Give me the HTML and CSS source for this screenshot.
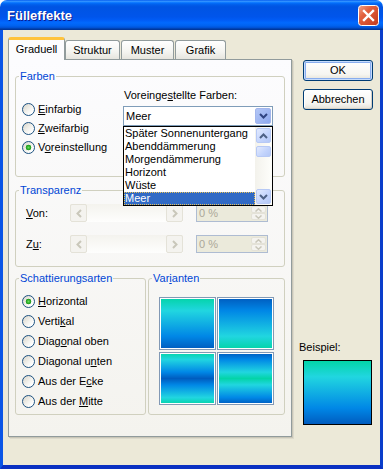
FILE: index.html
```html
<!DOCTYPE html>
<html lang="de">
<head>
<meta charset="utf-8">
<title>Fülleffekte</title>
<link rel="stylesheet" href="styles.css">
</head>
<body>
<div class="dialog">
  <div class="titlebar">
    <span class="title">Fülleffekte</span>
    <span class="close">
      <svg width="21" height="21" viewBox="0 0 21 21">
        <defs>
          <linearGradient id="cg" x1="0" y1="0" x2="1" y2="1">
            <stop offset="0" stop-color="#F2A48C"/>
            <stop offset="0.35" stop-color="#E2613F"/>
            <stop offset="1" stop-color="#C2391B"/>
          </linearGradient>
        </defs>
        <rect x="0.5" y="0.5" width="20" height="20" rx="3" fill="url(#cg)" stroke="#FFFFFF"/>
        <path d="M6 6 L15 15 M15 6 L6 15" stroke="#FFFFFF" stroke-width="2.4" stroke-linecap="square"/>
      </svg>
    </span>
  </div>
  <div class="client">
    <div class="tabarea">
      <div class="tabs">
        <div class="tab tab-sel">Graduell</div>
        <div class="tab tab-struktur">Struktur</div>
        <div class="tab tab-muster">Muster</div>
        <div class="tab tab-grafik">Grafik</div>
      </div>
      <div class="panel">
        <fieldset class="group g-farben">
          <legend>Farben</legend>
          <div class="farben-body">
            <div class="radios r-farben">
              <div class="radio"><span class="rb"></span><span><u>E</u>infarbig</span></div>
              <div class="radio"><span class="rb"></span><span><u>Z</u>weifarbig</span></div>
              <div class="radio"><span class="rb rb-on"></span><span>V<u>o</u>reinstellung</span></div>
            </div>
            <div class="preset">
              <div class="preset-label">Voreinge<u>s</u>tellte Farben:</div>
              <div class="combo">
                <div class="combo-box">
                  <span class="combo-text">Meer</span>
                  <span class="combo-btn">
                    <svg width="9" height="6" viewBox="0 0 9 6"><polyline points="1,1 4.5,4.5 8,1" fill="none" stroke="#2F4380" stroke-width="2"/></svg>
                  </span>
                </div>
                <div class="list">
                  <div class="lrows">
                    <div class="lrow">Später Sonnenuntergang</div>
                    <div class="lrow">Abenddämmerung</div>
                    <div class="lrow">Morgendämmerung</div>
                    <div class="lrow">Horizont</div>
                    <div class="lrow">Wüste</div>
                    <div class="lrow lrow-sel">Meer</div>
                  </div>
                  <div class="vscroll">
                    <span class="sbtn">
                      <svg width="9" height="6" viewBox="0 0 9 6"><polyline points="1,5 4.5,1.5 8,5" fill="none" stroke="#4D6185" stroke-width="2"/></svg>
                    </span>
                    <span class="thumb"></span>
                    <span class="vspace"></span>
                    <span class="sbtn">
                      <svg width="9" height="6" viewBox="0 0 9 6"><polyline points="1,1 4.5,4.5 8,1" fill="none" stroke="#4D6185" stroke-width="2"/></svg>
                    </span>
                  </div>
                </div>
              </div>
            </div>
          </div>
        </fieldset>

        <fieldset class="group g-trans">
          <legend>Transparenz</legend>
          <div class="trow trow1">
            <span class="tlabel"><u>V</u>on:</span>
            <div class="slider">
              <span class="hbtn"><svg width="6" height="9" viewBox="0 0 6 9"><polyline points="5,1 1.5,4.5 5,8" fill="none" stroke="#C9C7BA" stroke-width="2"/></svg></span>
              <span class="htrack"></span>
              <span class="hbtn"><svg width="6" height="9" viewBox="0 0 6 9"><polyline points="1,1 4.5,4.5 1,8" fill="none" stroke="#C9C7BA" stroke-width="2"/></svg></span>
            </div>
            <div class="spin">
              <span class="spin-text">0 %</span>
              <span class="spin-btns">
                <span class="spin-btn"><svg width="7" height="4" viewBox="0 0 7 4"><polyline points="0.5,3.5 3.5,0.8 6.5,3.5" fill="none" stroke="#C9C7BA" stroke-width="1.5"/></svg></span>
                <span class="spin-btn"><svg width="7" height="4" viewBox="0 0 7 4"><polyline points="0.5,0.5 3.5,3.2 6.5,0.5" fill="none" stroke="#C9C7BA" stroke-width="1.5"/></svg></span>
              </span>
            </div>
          </div>
          <div class="trow trow2">
            <span class="tlabel">Z<u>u</u>:</span>
            <div class="slider">
              <span class="hbtn"><svg width="6" height="9" viewBox="0 0 6 9"><polyline points="5,1 1.5,4.5 5,8" fill="none" stroke="#C9C7BA" stroke-width="2"/></svg></span>
              <span class="htrack"></span>
              <span class="hbtn"><svg width="6" height="9" viewBox="0 0 6 9"><polyline points="1,1 4.5,4.5 1,8" fill="none" stroke="#C9C7BA" stroke-width="2"/></svg></span>
            </div>
            <div class="spin">
              <span class="spin-text">0 %</span>
              <span class="spin-btns">
                <span class="spin-btn"><svg width="7" height="4" viewBox="0 0 7 4"><polyline points="0.5,3.5 3.5,0.8 6.5,3.5" fill="none" stroke="#C9C7BA" stroke-width="1.5"/></svg></span>
                <span class="spin-btn"><svg width="7" height="4" viewBox="0 0 7 4"><polyline points="0.5,0.5 3.5,3.2 6.5,0.5" fill="none" stroke="#C9C7BA" stroke-width="1.5"/></svg></span>
              </span>
            </div>
          </div>
        </fieldset>

        <div class="lower">
          <fieldset class="group g-schatt">
            <legend>Schattierungsarten</legend>
            <div class="radios r-schatt">
              <div class="radio"><span class="rb rb-on"></span><span><u>H</u>orizontal</span></div>
              <div class="radio"><span class="rb"></span><span>Verti<u>k</u>al</span></div>
              <div class="radio"><span class="rb"></span><span>Diag<u>o</u>nal oben</span></div>
              <div class="radio"><span class="rb"></span><span>Diagonal u<u>n</u>ten</span></div>
              <div class="radio"><span class="rb"></span><span>Aus der E<u>c</u>ke</span></div>
              <div class="radio"><span class="rb"></span><span>Aus der <u>M</u>itte</span></div>
            </div>
          </fieldset>
          <fieldset class="group g-var">
            <legend>Var<u>i</u>anten</legend>
            <div class="swatches">
              <span class="sw grad-a"></span>
              <span class="sw grad-b"></span>
              <span class="sw grad-c"></span>
              <span class="sw grad-d"></span>
            </div>
          </fieldset>
        </div>
      </div>
    </div>
    <div class="side">
      <div class="btn btn-ok">OK</div>
      <div class="btn btn-cancel">Abbrechen</div>
      <div class="sample-label">Beispiel:</div>
      <div class="sample grad-a"></div>
    </div>
  </div>
</div>
</body>
</html>
```

FILE: styles.css
```css
* { box-sizing: border-box; }
html, body { margin: 0; padding: 0; }
body {
  width: 385px;
  height: 470px;
  overflow: hidden;
  background: #FFFFFF;
  font-family: "Liberation Sans", Arial, sans-serif;
  font-size: 11px;
  line-height: 13px;
  color: #000000;
}
u { text-decoration: underline; text-underline-offset: 1px; }

.dialog {
  width: 383px;
  height: 469px;
  display: flex;
  flex-direction: column;
}

.titlebar {
  height: 30px;
  flex: none;
  display: flex;
  justify-content: space-between;
  align-items: flex-start;
  border-radius: 7px 7px 0 0;
  background: linear-gradient(to bottom,
    #0058EE 0%, #3593FF 4%, #288EFF 6%, #127DFF 8%, #036FFC 10%,
    #0262EE 14%, #0057E5 20%, #0054E3 24%, #0055EB 56%, #005BF5 66%,
    #026AFE 76%, #0062EF 86%, #0052D6 92%, #0040AB 96%, #003092 100%);
}
.title {
  margin: 8px 0 0 7px;
  font-size: 13px;
  font-weight: bold;
  line-height: 16px;
  color: #FFFFFF;
  text-shadow: 1px 1px 0 #0A1A8F;
}
.close {
  display: block;
  width: 21px;
  height: 21px;
  margin: 5px 4px 0 0;
}
.close svg { display: block; }

.client {
  flex: 1;
  display: flex;
  background: #ECE9D8;
  border-left: 3px solid #0A55E6;
  border-right: 3px solid #0A3ECB;
  border-bottom: 4px solid #0A30C2;
}

.tabarea {
  margin: 7px 0 0 5px;
  width: 284px;
  display: flex;
  flex-direction: column;
}
.tabs {
  display: flex;
  align-items: flex-end;
  height: 22px;
}
.tab {
  height: 19px;
  border: 1px solid #919B9C;
  border-bottom: none;
  border-radius: 3px 3px 0 0;
  background: linear-gradient(#FFFFFF, #F4F4F0 60%, #E6E5DE);
  text-align: center;
  line-height: 17px;
  padding-top: 1px;
}
.tab-sel {
  width: 57px;
  height: 23px;
  margin-bottom: -1px;
  position: relative;
  z-index: 1;
  border-top: 3px solid #FFC33C;
  background: #FCFCFE;
  line-height: 19px;
  padding-top: 0;
}
.tab-struktur { width: 55px; }
.tab-muster { width: 53px; margin-left: 1px; }
.tab-grafik { width: 51px; margin-left: 1px; }

.panel {
  height: 378px;
  border: 1px solid #919B9C;
  background: linear-gradient(#FCFCFE, #F4F3EE);
  box-shadow: 1px 1px 0 #C9C6B7, 2px 2px 0 #DDDACC;
  padding: 10px 6px 0 6px;
}

.group {
  margin: 0;
  min-width: 0;
  border: 1px solid #D0D0BF;
  border-radius: 3px;
  padding: 0 0 0 3px;
}
.group legend {
  padding: 0 1px;
  margin: 0;
  line-height: 13px;
  color: #0046D5;
}

.radio {
  display: flex;
  align-items: center;
  height: 19px;
  white-space: nowrap;
}
.rb {
  flex: none;
  width: 13px;
  height: 13px;
  margin-right: 3px;
  border: 1px solid #1C5180;
  border-radius: 50%;
  background: linear-gradient(135deg, #D8D5CA 0%, #F2F1EC 50%, #FFFFFF 80%);
}
.rb-on {
  background:
    radial-gradient(circle at 50% 50%, #66E05C 0px, #34B02E 1.6px, #1E9A1C 2.6px, rgba(30,154,28,0) 3.1px),
    linear-gradient(135deg, #D8D5CA 0%, #F2F1EC 50%, #FFFFFF 80%);
}

.g-farben { padding-bottom: 19px; }
.farben-body { display: flex; }
.r-farben { margin: 17px 0 0 3px; width: 101px; }
.preset { margin-top: 6px; }
.preset-label { padding-left: 1px; line-height: 13px; }
.combo {
  position: relative;
  margin-top: 4px;
  width: 150px;
}
.combo-box {
  height: 20px;
  border: 1px solid #7F9DB9;
  background: #FFFFFF;
  display: flex;
  align-items: center;
  padding: 1px;
}
.combo-text { flex: 1; padding-left: 1px; line-height: 16px; }
.combo-btn {
  width: 16px;
  height: 16px;
  border: 1px solid #A3B6EC;
  border-radius: 2px;
  background: linear-gradient(135deg, #B4C7F6, #8DA8EE);
  display: flex;
  align-items: center;
  justify-content: center;
}
.combo-btn svg, .sbtn svg, .hbtn svg, .spin-btn svg { display: block; }

.list {
  position: absolute;
  top: 20px;
  left: 0;
  z-index: 2;
  width: 150px;
  height: 80px;
  border: 1px solid #000000;
  background: #FFFFFF;
  display: flex;
}
.lrows { flex: 1; }
.lrow {
  height: 13px;
  line-height: 13px;
  padding-left: 1px;
  white-space: nowrap;
}
.lrow-sel {
  background: #316AC5;
  color: #FFFFFF;
  outline: 1px dotted #E9C25A;
  outline-offset: -1px;
}
.vscroll {
  width: 17px;
  padding: 1px;
  display: flex;
  flex-direction: column;
  background: linear-gradient(to right, #F3F2EC, #FEFEFB);
}
.sbtn, .thumb {
  border: 1px solid #B7C9F5;
  border-radius: 2px;
  background: linear-gradient(135deg, #E2EAFE, #C2D3FC 60%, #B4C8F6);
}
.sbtn {
  height: 15px;
  display: flex;
  align-items: center;
  justify-content: center;
}
.thumb { margin-top: 3px; height: 11px; }
.vspace { flex: 1; }

.g-trans { margin-top: 7px; padding-bottom: 13px; }
.trow {
  display: flex;
  align-items: center;
  height: 18px;
  margin-left: 7px;
}
.trow1 { margin-top: 7px; }
.trow2 { margin-top: 13px; }
.tlabel { width: 44px; }
.slider {
  width: 113px;
  height: 18px;
  display: flex;
  background: linear-gradient(#F4F3EE, #FEFEFD);
}
.hbtn {
  width: 17px;
  height: 18px;
  border: 1px solid #E4E2D8;
  border-radius: 2px;
  background: #F4F3EF;
  display: flex;
  align-items: center;
  justify-content: center;
}
.htrack { flex: 1; }
.spin {
  margin-left: 13px;
  width: 72px;
  height: 18px;
  border: 1px solid #AEBCD2;
  background: #EBEADB;
  display: flex;
}
.spin-text {
  flex: 1;
  padding-left: 2px;
  line-height: 16px;
  color: #ACA899;
}
.spin-btns {
  width: 16px;
  padding: 1px 1px 1px 0;
  display: flex;
  flex-direction: column;
}
.spin-btn {
  flex: 1;
  border: 1px solid #E4E2D8;
  border-radius: 2px;
  background: #F4F3EF;
  display: flex;
  align-items: center;
  justify-content: center;
}

.lower {
  display: flex;
  gap: 2px;
  margin-top: 5px;
}
.g-schatt { width: 131px; padding-bottom: 3px; }
.r-schatt { margin: 6px 0 0 3px; }
.r-schatt .radio { height: 20px; }
.g-var { width: 137px; }
.swatches {
  margin: 12px 0 0 7px;
  display: grid;
  grid-template-columns: 57px 57px;
  grid-template-rows: 53px 53px;
  column-gap: 1px;
  row-gap: 2px;
}
.sw {
  display: block;
  border: 1px solid #8299B5;
  box-shadow: inset 0 0 0 1px #FFFFFF;
}

.grad-a { background: linear-gradient(#03D4A8 0%, #21D6E0 25%, #0087E6 75%, #005CBF 100%); }
.grad-b { background: linear-gradient(to top, #03D4A8 0%, #21D6E0 25%, #0087E6 75%, #005CBF 100%); }
.grad-c { background: linear-gradient(#03D4A8 0%, #21D6E0 12.5%, #0087E6 37.5%, #005CBF 50%, #0087E6 62.5%, #21D6E0 87.5%, #03D4A8 100%); }
.grad-d { background: linear-gradient(#005CBF 0%, #0087E6 12.5%, #21D6E0 37.5%, #03D4A8 50%, #21D6E0 62.5%, #0087E6 87.5%, #005CBF 100%); }

.side {
  margin-left: 11px;
  width: 70px;
  display: flex;
  flex-direction: column;
}
.btn {
  width: 70px;
  height: 21px;
  border: 1px solid #003C74;
  border-radius: 3px;
  background: linear-gradient(#FFFFFF, #F6F5F1 70%, #E4E1D7);
  box-shadow: inset -1px -1px 0 #D6D0C5, inset 1px 1px 0 #FFFFFF;
  text-align: center;
  line-height: 19px;
}
.btn-ok {
  margin-top: 30px;
  box-shadow: inset 0 0 0 1px #C6DCFC, inset 0 0 0 2px #89ADEE;
}
.btn-cancel { margin-top: 8px; }
.sample-label {
  margin: 231px 0 0 -4px;
  line-height: 13px;
}
.sample {
  margin-top: 6px;
  width: 69px;
  height: 65px;
  border: 1px solid #000000;
}
```
